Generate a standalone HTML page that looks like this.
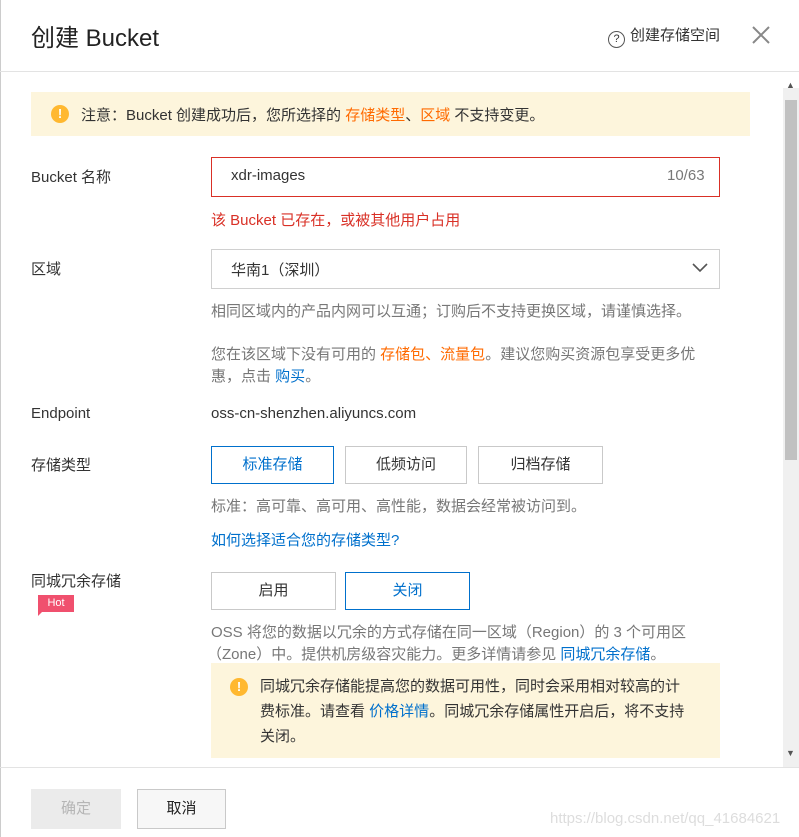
<!DOCTYPE html><html><head><meta charset="utf-8"><style>
body{margin:0;width:799px;height:837px;background:#fff;font-family:"Liberation Sans","Noto Sans CJK SC",sans-serif;font-size:15px;color:#333;position:relative;overflow:hidden}
.a{position:absolute;white-space:nowrap}
.o{color:#ff6a00}.b{color:#0070cc}.g{color:#777}
.btn{position:absolute;border:1px solid #c9c9c9;box-sizing:border-box;text-align:center;font-size:15px}
</style></head><body>
<div style="position:absolute;left:0;top:0;width:1px;height:837px;background:#ccc"></div>
<div class="a" style="left:31px;top:18px;font-size:24px;color:#222">创建 Bucket</div>
<div class="a" style="left:608px;top:24px;font-size:15px"><span style="display:inline-block;width:15px;height:15px;border:1px solid #555;border-radius:50%;font-size:11px;text-align:center;line-height:15px;vertical-align:-2px;margin-right:5px">?</span>创建存储空间</div>
<svg class="a" style="left:751px;top:25px" width="20" height="20"><path d="M2 2L18 18M18 2L2 18" stroke="#888" stroke-width="2"/></svg>
<div style="position:absolute;left:0;top:71px;width:799px;height:1px;background:#e3e3e3"></div>
<div style="position:absolute;left:783px;top:88px;width:16px;height:680px;background:#f0f0f0"></div>
<div style="position:absolute;left:785px;top:100px;width:12px;height:360px;background:#c1c1c1"></div>
<div class="a" style="left:786px;top:80px;font-size:9px;color:#555">▲</div>
<div class="a" style="left:786px;top:748px;font-size:9px;color:#555">▼</div>
<div style="position:absolute;left:31px;top:92px;width:719px;height:44px;background:#fdf5dc"></div>
<div class="a" style="left:51px;top:105px;width:18px;height:18px;border-radius:50%;background:#ffb830;color:#fff;font-weight:bold;text-align:center;line-height:18px;font-size:13px">!</div>
<div class="a" style="left:81px;top:104px">注意：Bucket 创建成功后，您所选择的 <span class="o">存储类型</span>、<span class="o">区域</span> 不支持变更。</div>
<div class="a" style="left:31px;top:166px">Bucket 名称</div>
<div style="position:absolute;left:211px;top:157px;width:509px;height:40px;border:1px solid #d93026;box-sizing:border-box"></div>
<div class="a" style="left:231px;top:167px">xdr-images</div>
<div class="a g" style="left:667px;top:167px">10/63</div>
<div class="a" style="left:211px;top:209px;color:#d93026">该 Bucket 已存在，或被其他用户占用</div>
<div class="a" style="left:31px;top:258px">区域</div>
<div style="position:absolute;left:211px;top:249px;width:509px;height:40px;border:1px solid #d0d0d0;box-sizing:border-box"></div>
<div class="a" style="left:231px;top:259px">华南1（深圳）</div>
<svg class="a" style="left:692px;top:263px" width="16" height="10"><path d="M1 1L8 8L15 1" stroke="#555" stroke-width="1.6" fill="none"/></svg>
<div class="a g" style="left:211px;top:300px">相同区域内的产品内网可以互通；订购后不支持更换区域，请谨慎选择。</div>
<div class="a g" style="left:211px;top:343px">您在该区域下没有可用的 <span class="o">存储包、流量包</span>。建议您购买资源包享受更多优</div>
<div class="a g" style="left:211px;top:365px">惠，点击 <span class="b">购买</span>。</div>
<div class="a" style="left:31px;top:405px">Endpoint</div>
<div class="a" style="left:211px;top:405px">oss-cn-shenzhen.aliyuncs.com</div>
<div class="a" style="left:31px;top:454px">存储类型</div>
<div class="btn" style="left:211px;top:446px;width:123px;height:38px;line-height:36px;border-color:#0070cc;color:#0070cc">标准存储</div>
<div class="btn" style="left:345px;top:446px;width:122px;height:38px;line-height:36px">低频访问</div>
<div class="btn" style="left:478px;top:446px;width:125px;height:38px;line-height:36px">归档存储</div>
<div class="a g" style="left:211px;top:495px">标准：高可靠、高可用、高性能，数据会经常被访问到。</div>
<div class="a b" style="left:211px;top:529px">如何选择适合您的存储类型?</div>
<div class="a" style="left:31px;top:570px">同城冗余存储</div>
<div class="a" style="left:38px;top:595px;width:36px;height:17px;background:#f0506e;color:#fff;font-size:11px;text-align:center;line-height:17px">Hot</div>
<div class="a" style="left:38px;top:611px;width:0;height:0;border-top:5px solid #f0506e;border-right:5px solid transparent"></div>
<div class="btn" style="left:211px;top:572px;width:125px;height:38px;line-height:36px">启用</div>
<div class="btn" style="left:345px;top:572px;width:125px;height:38px;line-height:36px;border-color:#0070cc;color:#0070cc">关闭</div>
<div class="a g" style="left:211px;top:621px">OSS 将您的数据以冗余的方式存储在同一区域（Region）的 3 个可用区</div>
<div class="a g" style="left:207px;top:643px">（Zone）中。提供机房级容灾能力。更多详情请参见 <span class="b">同城冗余存储</span>。</div>
<div style="position:absolute;left:211px;top:663px;width:509px;height:95px;background:#fdf5dc"></div>
<div class="a" style="left:230px;top:678px;width:18px;height:18px;border-radius:50%;background:#ffb830;color:#fff;font-weight:bold;text-align:center;line-height:18px;font-size:13px">!</div>
<div class="a" style="left:260px;top:674px;line-height:25px;white-space:normal;width:432px">同城冗余存储能提高您的数据可用性，同时会采用相对较高的计费标准。请查看 <span class="b">价格详情</span>。同城冗余存储属性开启后，将不支持关闭。</div>
<div style="position:absolute;left:0;top:767px;width:799px;height:1px;background:#e3e3e3"></div>
<div class="btn" style="left:31px;top:789px;width:90px;height:40px;line-height:40px;background:#ebebeb;border:none;color:#b5b5b5">确定</div>
<div class="btn" style="left:137px;top:789px;width:89px;height:40px;line-height:38px;background:#f7f7f7;color:#222">取消</div>
<div class="a" style="left:550px;top:810px;color:#ddd;font-size:15px">https://blog.csdn.net/qq_41684621</div>
</body></html>
